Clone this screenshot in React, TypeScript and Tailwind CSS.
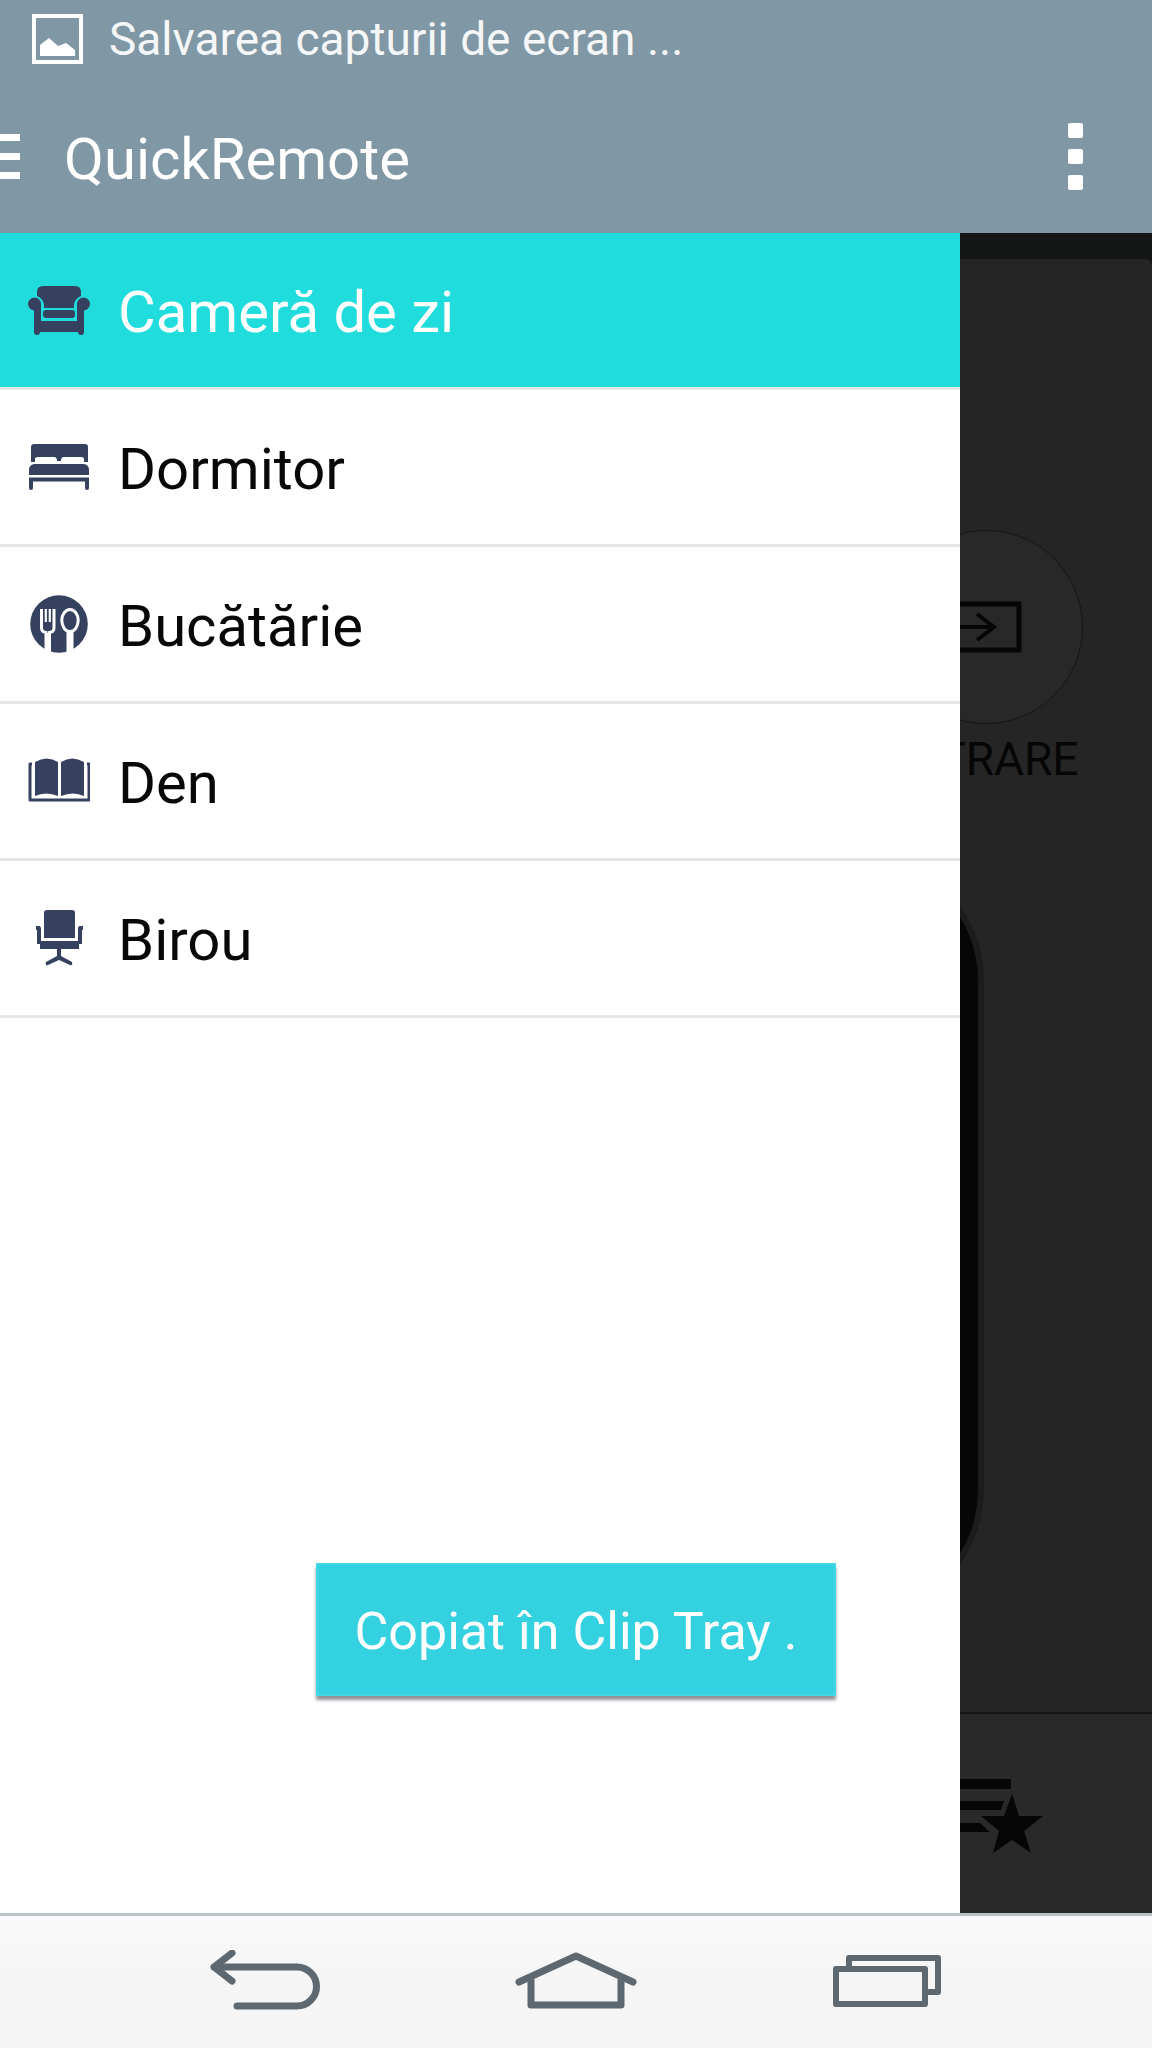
import type { ReactNode } from 'react';

interface Room {
  name: string;
  icon: ReactNode;
}

const roomIcon = 'w-[62px] h-[58px] shrink-0 fill-[#36415f]';

const SofaIcon = () => (
  <svg viewBox="0 0 62 58" className={roomIcon} aria-hidden="true">
    <path d="M15 5H47Q53 5 53 11V15Q46 18 46 25V27H16V25Q16 18 9 15V11Q9 5 15 5Z" />
    <rect x="15" y="29" width="32" height="8" rx="3" />
    <circle cx="6.5" cy="23" r="6.5" />
    <circle cx="55.5" cy="23" r="6.5" />
    <path d="M6 23H13V40H49V23H56V51Q56 54 53 54T50 51H12Q12 54 9 54T6 51Z" />
  </svg>
);

const BedIcon = () => (
  <svg viewBox="0 0 62 58" className={roomIcon} aria-hidden="true">
    <path d="M3 24V9Q3 6 6 6H57Q60 6 60 9V24H56V21Q56 19 53 19H36Q33 19 33 23H29Q29 19 26 19H10Q7 19 7 21V24Z" />
    <path d="M6 26H56Q61 27 61 32V37H1V32Q1 27 6 26Z" />
    <path d="M1 39.5H61V50Q61 52 59 52T57 50V43.5H5V50Q5 52 3 52T1 50Z" />
  </svg>
);

const CutleryIcon = () => (
  <svg viewBox="0 0 62 58" className={roomIcon} aria-hidden="true">
    <circle cx="31" cy="29" r="28.8" />
    <g fill="none" stroke="#fff" strokeWidth="3">
      <path d="M13.5 14V33Q13.5 37 18 37.5V56M26 14V33Q26 37 21.5 37.5V58" />
      <path d="M17.8 14V27M21.8 14V27" strokeWidth="2.2" />
      <ellipse cx="42" cy="25.5" rx="8.2" ry="11" />
      <path d="M40 36V59M44 36V57" />
    </g>
    <path d="M19.5 38V58M42 37V58" stroke="#fff" strokeWidth="3" />
  </svg>
);

const BookIcon = () => (
  <svg viewBox="0 0 62 58" className={roomIcon} aria-hidden="true">
    <path d="M7 10Q19 3 30 10V44Q18 39 7 44ZM33 10Q44 3 56 10V44Q45 39 33 44Z" />
    <path d="M4 12H2V48H61V12H59" fill="none" stroke="#36415f" strokeWidth="3" strokeLinejoin="round" />
  </svg>
);

const ChairIcon = () => (
  <svg viewBox="0 0 62 58" className={roomIcon} aria-hidden="true">
    <path d="M19 1H44Q47 1 47 4V29H16V4Q16 1 19 1Z" />
    <path d="M8 17H11Q13 17 13 20V32H50V20Q50 17 52 17H55V21H54V35H51V40H33V47L44 53Q45 57 42 56L31 51L20 56Q17 57 18 53L29 47V40H12V35H9V21H8Z" />
  </svg>
);

const rooms: Room[] = [
  { name: 'Cameră de zi', icon: <SofaIcon /> },
  { name: 'Dormitor', icon: <BedIcon /> },
  { name: 'Bucătărie', icon: <CutleryIcon /> },
  { name: 'Den', icon: <BookIcon /> },
  { name: 'Birou', icon: <ChairIcon /> }
];

const Header = () => (
  <header className="bg-[#8097a5] text-white">
    <div className="flex h-20 items-center gap-[26px] pb-0.5 pl-8 text-[46px] text-[#f4f6f7]">
      <svg viewBox="0 0 51 50" className="h-[50px] w-[51px]" aria-hidden="true">
        <rect x="2" y="2" width="47" height="46" fill="none" stroke="#fff" strokeWidth="4" />
        <path d="M8 42V31L17 24L26 32L34 29L43 36V42Z" fill="#fff" />
      </svg>
      <span>Salvarea capturii de ecran ...</span>
    </div>
    <div className="flex h-[153px] items-center pr-[69px]">
      <button aria-label="Meniu" className="flex w-5 flex-col gap-3">
        <span className="h-[7px] bg-white" />
        <span className="h-[7px] bg-white" />
        <span className="h-[7px] bg-white" />
      </button>
      <h1 className="flex-1 pt-1.5 pl-11 text-[58px]">QuickRemote</h1>
      <button aria-label="Mai multe opțiuni" className="flex flex-col gap-[11px]">
        <span className="size-[15px] rounded-xs bg-white" />
        <span className="size-[15px] rounded-xs bg-white" />
        <span className="size-[15px] rounded-xs bg-white" />
      </button>
    </div>
  </header>
);

const RemotePanel = () => (
  <section className="flex flex-1 flex-col rounded-t-lg bg-[#252525]">
    <div className="flex flex-1 flex-col items-end pt-[271px] pr-[69px] pb-24">
      <button className="flex w-[194px] flex-col items-center gap-[9px] text-[46px] leading-[52px] text-[#060606]">
        <span className="flex size-[194px] items-center justify-center rounded-full border border-[#161616] bg-[#282828]">
          <svg viewBox="0 0 72 52" className="h-[52px] w-[72px]" fill="none" stroke="#060606" aria-hidden="true">
            <path d="M3 16V3H69V49H3V36" strokeWidth="5" />
            <path d="M0 26H43M27 13L44 26L27 39" strokeWidth="4" />
          </svg>
        </span>
        INTRARE
      </button>
      <div className="mt-[69px] mr-[99px] h-[762px] w-[252px] rounded-full border-6 border-[#1b1d1d] bg-[#060606]" />
    </div>
    <div className="flex h-[201px] items-center justify-end border-t-2 border-[#161616] bg-[#292929] pt-1 pr-[109px]">
      <button aria-label="Favorite">
        <svg viewBox="0 0 92 76" className="h-[76px] w-[92px]" fill="#060606" aria-hidden="true">
          <path d="M0 1H60V11H0ZM0 23H53L50 32H0ZM0 45H29L39 54H0Z" />
          <path d="M61 16L68 38H92L73 53L80 75L61 62L42 75L48 53L30 38H53Z" />
        </svg>
      </button>
    </div>
  </section>
);

const RoomDrawer = () => (
  <nav className="absolute inset-y-0 left-0 w-5/6 bg-white">
    <ul>
      {rooms.map((room, index) => (
        <li key={room.name} className="border-b-3 border-[#e5e7e7]">
          <button
            className={`flex h-[154px] w-full items-center gap-7 pl-7 text-left text-[58px] ${
              index === 0 ? 'bg-[#20dcdc] text-white' : 'bg-white text-[#080808]'
            }`}
          >
            {room.icon}
            <span className="pt-1">{room.name}</span>
          </button>
        </li>
      ))}
    </ul>
  </nav>
);

const NavigationBar = () => (
  <footer className="flex h-[135px] border-t-3 border-[#b9c2c5] bg-linear-to-b from-[#fafafa] via-[#f5f5f5] to-[#f5f5f5] px-[110px] pb-1 *:flex *:flex-1 *:items-center *:justify-center">
    <button aria-label="Înapoi">
      <svg viewBox="0 0 110 60" className="h-[60px] w-[110px]" fill="none" stroke="#5d6870" strokeWidth="7" strokeLinecap="round" strokeLinejoin="round" aria-hidden="true">
        <path d="M22 3L4 17L22 31M4 17H87a19 19 0 0 1 0 39H27" />
      </svg>
    </button>
    <button aria-label="Acasă">
      <svg viewBox="0 0 122 60" className="h-[60px] w-[122px]" fill="none" stroke="#5d6870" strokeWidth="7" strokeLinecap="round" strokeLinejoin="round" aria-hidden="true">
        <path d="M4 32L61 6L118 32M16 28V55H106V28" />
      </svg>
    </button>
    <button aria-label="Aplicații recente">
      <svg viewBox="0 0 110 60" className="h-[60px] w-[110px]" fill="none" stroke="#5d6870" strokeWidth="6" strokeLinejoin="round" aria-hidden="true">
        <path d="M4 19H93V54H4ZM17 19V8H106V42H93" />
      </svg>
    </button>
  </footer>
);

export default function App() {
  return (
    <div className="relative flex min-h-screen flex-col overflow-hidden font-[Roboto,sans-serif]">
      <Header />
      <main className="relative flex flex-1 flex-col bg-[#141616] pt-[26px]">
        <RemotePanel />
        <RoomDrawer />
      </main>
      <NavigationBar />

      {/* Toast */}
      <div className="pointer-events-none absolute inset-x-0 bottom-[352px] flex justify-center">
        <div role="status" className="border-2 border-[#42d9e5] bg-[#34d1e0] px-9 pt-[34px] pb-[30px] text-[52px] leading-[65px] text-white shadow-[0_4px_3px_rgba(70,75,80,0.6)]">
          Copiat în Clip Tray .
        </div>
      </div>
    </div>
  );
}
